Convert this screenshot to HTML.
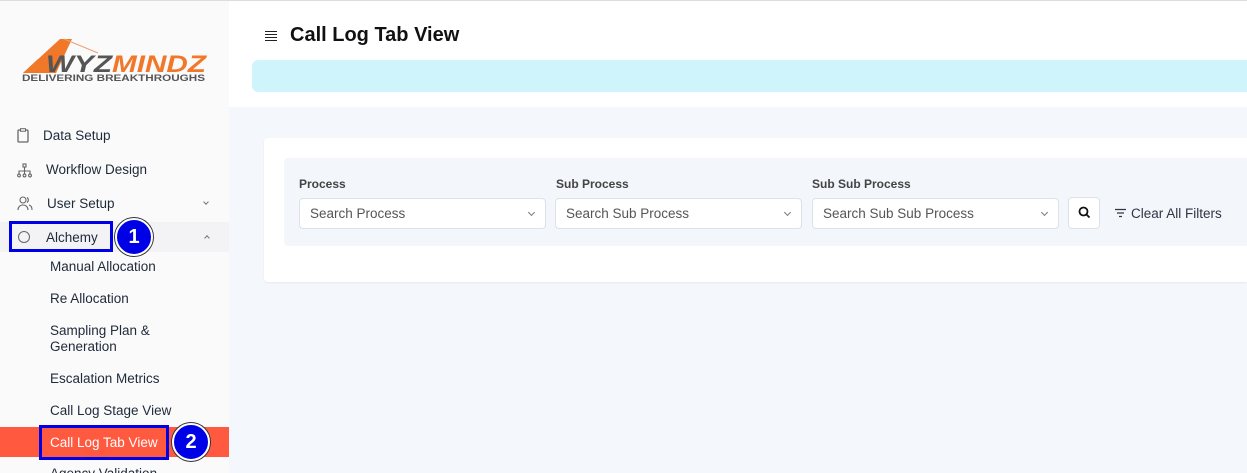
<!DOCTYPE html>
<html><head><meta charset="utf-8"><style>
*{box-sizing:border-box;margin:0;padding:0}
html,body{width:1247px;height:473px;overflow:hidden}
body{font-family:"Liberation Sans",sans-serif;background:#f4f7fb;position:relative;color:#212529}
.side{position:absolute;left:0;top:0;width:229px;height:473px;background:#fafafa;border-top:1px solid #ddd;overflow:hidden}
.main{position:absolute;left:229px;top:0;right:0;height:107px;background:#fff;border-top:1px solid #ddd}
.abs{position:absolute}
.nav{position:absolute;font-size:13.5px;color:#1e2a3a}
.sub{position:absolute;left:50px;font-size:13.5px;color:#1e2a3a;line-height:16px}
.badge{position:absolute;width:38px;height:38px;border-radius:50%;background:#0000e6;border:2px solid #fff;box-shadow:0 0 0 1px #333;color:#fff;font-weight:bold;font-size:20px;text-align:center;line-height:34px}
.lbl{position:absolute;top:177px;font-size:12px;font-weight:bold;color:#444}
.sel{position:absolute;top:198px;width:247px;height:31px;background:#fff;border:1px solid #dde2e8;border-radius:4px;font-size:13.5px;color:#555;padding:7px 10px}
.sel:after{content:"";position:absolute;right:11px;top:11px;width:4px;height:4px;border-right:1px solid #777;border-bottom:1px solid #777;transform:rotate(45deg)}
</style></head><body>
<div class="side">
 <svg class="abs" style="left:20px;top:34px" width="190" height="50" viewBox="0 0 190 50">
  <polygon points="3,38 40,4 52,4 36,38" fill="#f07828"/>
  <polygon points="3,38 18,24 40,24 36,38" fill="#f07828"/>
  <line x1="44" y1="4" x2="78" y2="18" stroke="#f0a070" stroke-width="1"/>
  <text x="26" y="37" font-family="Liberation Sans" font-weight="bold" font-style="italic" font-size="24" fill="#555" textLength="66" lengthAdjust="spacingAndGlyphs">WYZ</text>
  <text x="92" y="37" font-family="Liberation Sans" font-weight="bold" font-style="italic" font-size="24" fill="#f07828" textLength="94" lengthAdjust="spacingAndGlyphs">MINDZ</text>
  <text x="2" y="46" font-family="Liberation Sans" font-weight="bold" font-size="9" fill="#555" textLength="183" lengthAdjust="spacingAndGlyphs">DELIVERING  BREAKTHROUGHS</text>
 </svg>
 <svg class="abs" style="left:17px;top:127px" width="12" height="15" viewBox="0 0 12 15"><rect x="1" y="2" width="10" height="12" rx="1" fill="none" stroke="#666" stroke-width="1.3"/><rect x="3.5" y="0.7" width="5" height="2.5" fill="#fff" stroke="#666" stroke-width="1"/></svg>
 <div class="nav" style="left:43px;top:127px">Data Setup</div>
 <svg class="abs" style="left:17px;top:162px" width="15" height="15" viewBox="0 0 15 15" fill="none" stroke="#666" stroke-width="1.1"><rect x="6" y="1" width="3" height="3"/><path d="M7.5 4v4M2 11V8h11v3M7.5 8v3"/><circle cx="2" cy="12.5" r="1.4"/><circle cx="7.5" cy="12.5" r="1.4"/><circle cx="13" cy="12.5" r="1.4"/></svg>
 <div class="nav" style="left:46px;top:161px">Workflow Design</div>
 <svg class="abs" style="left:17px;top:195px" width="16" height="15" viewBox="0 0 16 15" fill="none" stroke="#666" stroke-width="1.1"><circle cx="6" cy="4" r="3"/><path d="M1 14c0-3 2-5 5-5s5 2 5 5M10 1.5a3 3 0 010 5M12 9c2 .5 3 2.5 3 5"/></svg>
 <div class="nav" style="left:47px;top:195px">User Setup</div>
 <div class="abs" style="left:204px;top:199px;width:4px;height:4px;border-right:1px solid #777;border-bottom:1px solid #777;transform:rotate(45deg)"></div>
 <div class="abs" style="left:0;top:221px;width:229px;height:30px;background:#f3f3f5"></div>
 <div class="abs" style="left:9px;top:220px;width:104px;height:31px;border:3px solid #0000e6"></div>
 <div class="abs" style="left:18px;top:230px;width:12px;height:12px;border-radius:50%;border:1.3px solid #666"></div>
 <div class="nav" style="left:46px;top:229px">Alchemy</div>
 <div class="badge" style="left:115px;top:217px">1</div>
 <div class="abs" style="left:205px;top:235px;width:4px;height:4px;border-left:1px solid #777;border-top:1px solid #777;transform:rotate(45deg)"></div>
 <div class="sub" style="top:258px">Manual Allocation</div>
 <div class="sub" style="top:290px">Re Allocation</div>
 <div class="sub" style="top:322px">Sampling Plan &amp;<br>Generation</div>
 <div class="sub" style="top:370px">Escalation Metrics</div>
 <div class="sub" style="top:402px">Call Log Stage View</div>
 <div class="abs" style="left:0;top:426px;width:229px;height:30px;background:#ff5a3f"></div>
 <div class="abs" style="left:39px;top:424px;width:130px;height:35px;border:3px solid #0000e6"></div>
 <div class="sub" style="top:434px;color:#fff">Call Log Tab View</div>
 <div class="badge" style="left:172px;top:422px">2</div>
 <div class="sub" style="top:465px">Agency Validation</div>
</div>
<div class="main">
 <div class="abs" style="left:36px;top:30px;width:12px;font-size:0">
  <div style="height:1px;background:#222;margin-bottom:2px"></div><div style="height:1px;background:#222;margin-bottom:2px"></div><div style="height:1px;background:#222;margin-bottom:2px"></div><div style="height:1px;background:#222"></div>
 </div>
 <div class="abs" style="left:61px;top:23px;font-size:20px;font-weight:bold;color:#111">Call Log Tab View</div>
 <div class="abs" style="left:23px;top:59px;right:0;height:32px;background:#cff4fc;border-radius:6px 0 0 6px"></div>
</div>
<div class="abs" style="left:264px;top:138px;right:0;height:144px;background:#fff;border-radius:4px 0 0 4px;box-shadow:0 1px 2px rgba(0,0,0,.06)"></div>
<div class="abs" style="left:284px;top:158px;right:0;height:88px;background:#f3f6fb;border-radius:4px 0 0 4px"></div>
<div class="lbl" style="left:299px">Process</div>
<div class="lbl" style="left:556px">Sub Process</div>
<div class="lbl" style="left:812px">Sub Sub Process</div>
<div class="sel" style="left:299px">Search Process</div>
<div class="sel" style="left:555px">Search Sub Process</div>
<div class="sel" style="left:812px">Search Sub Sub Process</div>
<div class="abs" style="left:1068px;top:197px;width:32px;height:32px;background:#fff;border:1px solid #dde2e8;border-radius:4px">
 <svg style="position:absolute;left:9px;top:8px" width="13" height="13" viewBox="0 0 13 13" fill="none" stroke="#111" stroke-width="1.8"><circle cx="5.5" cy="5.5" r="4"/><path d="M8.5 8.5l3 3"/></svg>
</div>
<svg class="abs" style="left:1114px;top:208px" width="13" height="10" viewBox="0 0 13 10" stroke="#334" stroke-width="1.2"><path d="M1 1.5h11M3 5h7M5 8.5h3"/></svg>
<div class="abs" style="left:1131px;top:206px;font-size:13.5px;color:#334">Clear All Filters</div>
</body></html>
